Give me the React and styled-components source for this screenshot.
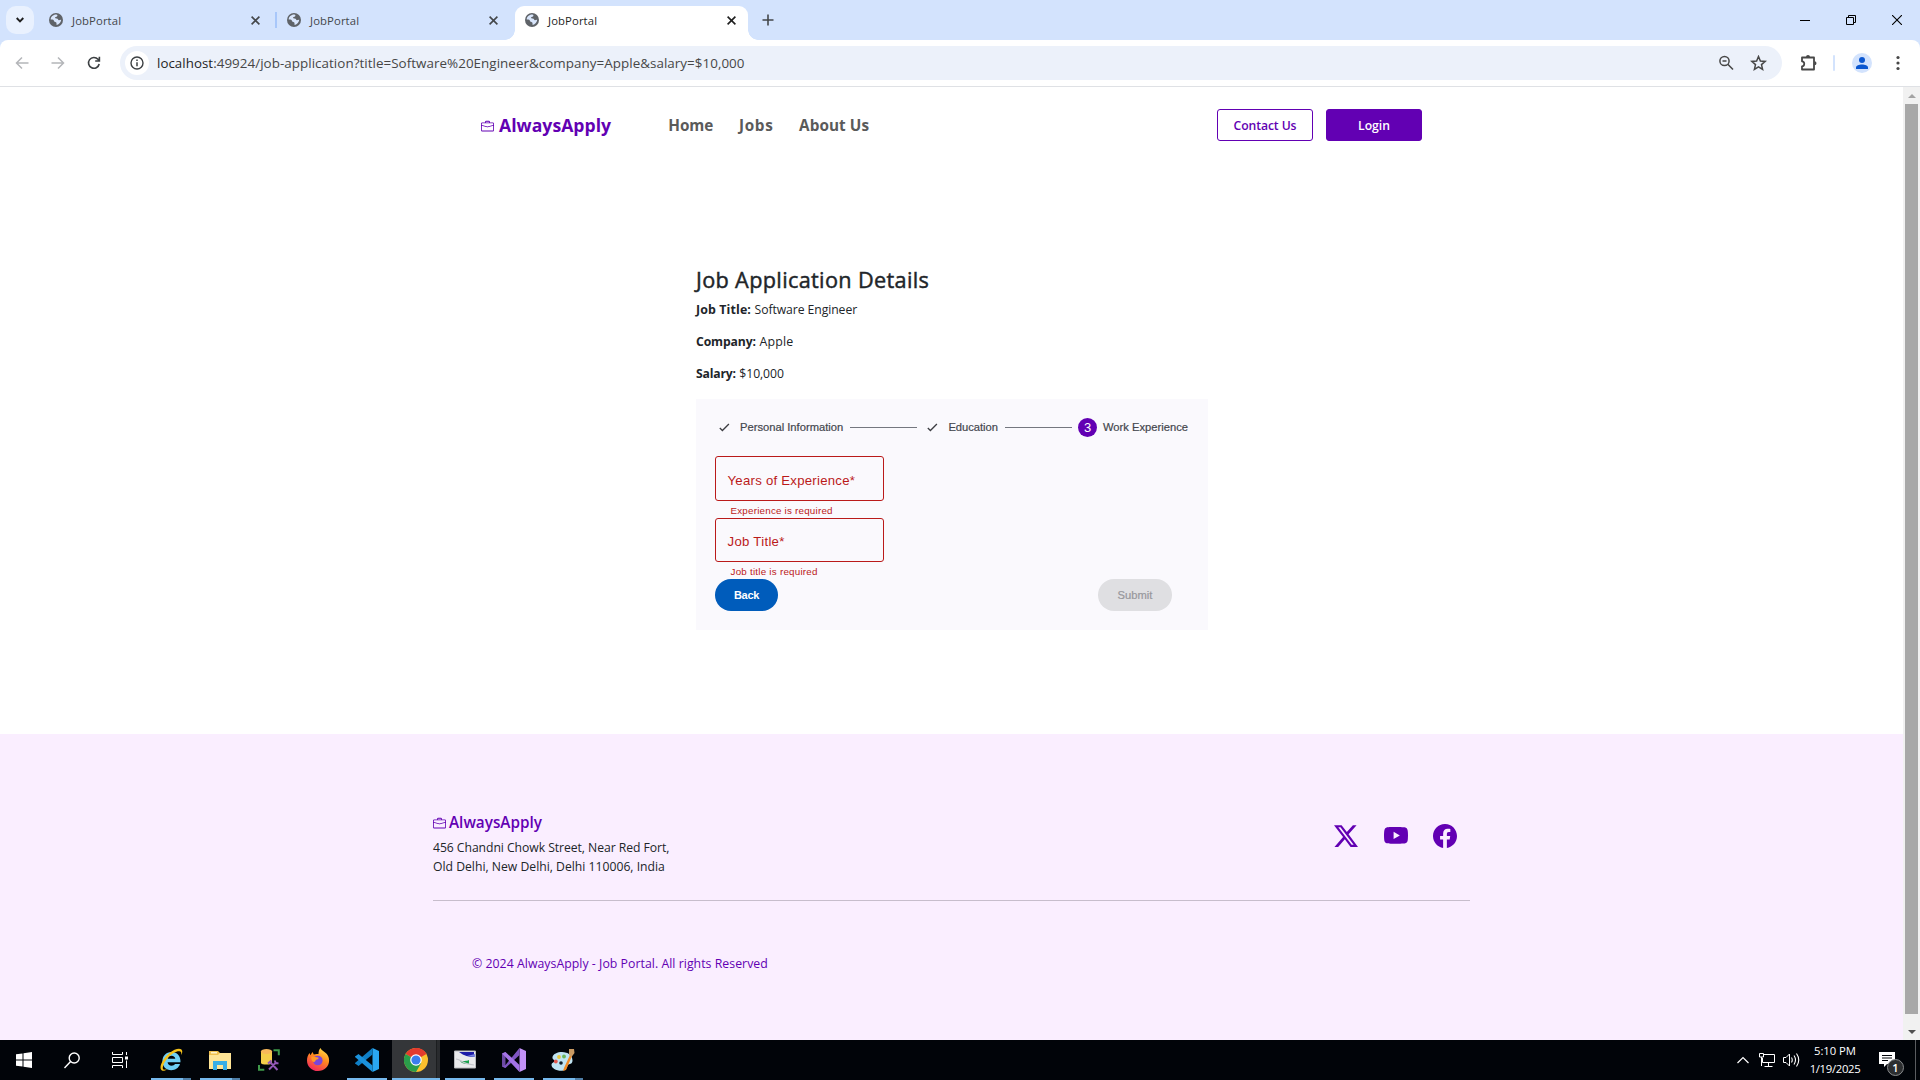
import React from "react";
import styled, { createGlobalStyle, css } from "styled-components";
import { BsTwitterX, BsYoutube, BsFacebook, BsBriefcase } from "react-icons/bs";

const ui = '"Open Sans", "Noto Sans", sans-serif';
const arial = '"Liberation Sans", Arial, sans-serif';
const purple = "#6200b3";

const Global = createGlobalStyle`
  * { box-sizing: border-box; }
  html, body { margin: 0; padding: 0; background: #fff; }
  body { width: 1920px; height: 1080px; overflow: hidden; font-family: ${ui}; }
  svg { display: block; flex: none; }
`;

const Txt = styled.span`
  display: block;
  flex: none;
  white-space: pre;
  font-family: ${(p) => (p.$arial ? arial : ui)};
  font-size: ${(p) => p.$s || 12.2}px;
  font-weight: ${(p) => p.$b || 400};
  letter-spacing: ${(p) => p.$ls || 0}px;
  line-height: ${(p) => p.$lh || 19}px;
  color: ${(p) => p.$c || "#212529"};
  -webkit-text-stroke: ${(p) => p.$stroke || 0}px currentColor;
`;

const Screen = styled.div`
  width: 1920px;
  height: 1080px;
  display: flex;
  flex-direction: column;
  background: #fff;
`;

/* ---------- browser ---------- */
const TabStrip = styled.div`
  height: 40px;
  display: flex;
  background: #d3e3fd;
  padding: 6px 0 0 6px;
`;
const TabSearch = styled.div`
  width: 28px;
  height: 28px;
  border-radius: 10px;
  background: #e9f1fe;
  display: grid;
  place-items: center;
  margin-right: 5px;
`;
const Tab = styled.div`
  position: relative;
  width: ${(p) => (p.$active ? 233 : 238)}px;
  height: 34px;
  padding: 0 0 6px 10px;
  display: flex;
  align-items: center;
  ${(p) =>
    p.$active &&
    css`
      background: #fff;
      border-radius: 9px 9px 0 0;
      &::before,
      &::after {
        content: "";
        position: absolute;
        bottom: 0;
        width: 10px;
        height: 10px;
      }
      &::before {
        left: -10px;
        background: radial-gradient(circle at 0 0, transparent 9.5px, #fff 10px);
      }
      &::after {
        right: -10px;
        background: radial-gradient(circle at 100% 0, transparent 9.5px, #fff 10px);
      }
    `}
`;
const TabTitle = styled.div`
  margin-left: 9px;
  width: 179px;
`;
const TabDivider = styled.i`
  width: 2px;
  height: 16px;
  margin-left: 15px;
  background: #a8c7fa;
`;
const NewTab = styled.div`
  margin: 8px 0 0 14px;
`;
const WindowButtons = styled.div`
  margin-left: auto;
  display: flex;
  gap: 36px;
  padding: 9px 18px 0 0;
`;
const ToolbarBack = styled.div`
  background: #d3e3fd;
`;
const Toolbar = styled.div`
  height: 47px;
  background: #fff;
  border-bottom: 1px solid #dfe1e5;
  border-radius: 8px 8px 0 0;
  display: flex;
  align-items: center;
  padding-left: 14px;
`;
const NavIcons = styled.div`
  display: flex;
  gap: 20px;
  width: 106px;
`;
const Omnibox = styled.div`
  width: 1662px;
  height: 34px;
  border-radius: 17px;
  background: #ecf1fa;
  display: flex;
  align-items: center;
  padding: 0 15px 0 5px;
`;
const SiteInfo = styled.div`
  width: 24px;
  height: 24px;
  border-radius: 50%;
  background: #fff;
  display: grid;
  place-items: center;
  margin-right: 8px;
`;
const OmniRight = styled.div`
  margin-left: auto;
  display: flex;
  gap: 16px;
`;
const ToolRight = styled.div`
  display: flex;
  align-items: center;
  margin-left: 17px;
`;
const ToolSep = styled.i`
  width: 2px;
  height: 16px;
  border-radius: 1px;
  background: #d3e3fd;
  margin: 0 17px 0 16px;
`;
const Avatar = styled.div`
  width: 20px;
  height: 20px;
  border-radius: 50%;
  background: #d3e3fd;
  display: grid;
  place-items: center;
  margin-right: 24px;
`;

/* ---------- page ---------- */
const Viewport = styled.div`
  height: 953px;
  display: flex;
`;
const Page = styled.div`
  width: 1903px;
  height: 953px;
  display: flex;
  flex-direction: column;
`;
const Header = styled.header`
  height: 76px;
  padding: 0 481px;
  display: flex;
  align-items: center;
`;
const Brand = styled.div`
  display: flex;
  align-items: center;
  gap: ${(p) => p.$gap}px;
  padding-top: ${(p) => p.$top || 0}px;
  color: ${purple};
`;
const BrandName = styled.div`
  padding-bottom: ${(p) => p.$lift || 0}px;
`;
const Menu = styled.nav`
  display: flex;
  gap: 25.5px;
  margin-left: 57px;
`;
const HeaderActions = styled.div`
  display: flex;
  gap: 13px;
  margin-left: auto;
`;
const ActionButton = styled.div`
  width: 96px;
  height: 32px;
  border-radius: 3px;
  border: 1px solid ${purple};
  background: ${(p) => (p.$filled ? purple : "#fff")};
  display: flex;
  align-items: center;
  justify-content: center;
`;
const Main = styled.main`
  width: 1208px;
  height: 571px;
  padding: 103px 0 0 696px;
`;
const Heading = styled.div`
  margin-bottom: 6px;
`;
const Detail = styled.div`
  display: flex;
  gap: 3.5px;
  height: 32px;
`;
const Panel = styled.section`
  width: 512px;
  height: 231px;
  margin-top: 3px;
  background: #faf9fd;
  padding: 19px;
`;
const Stepper = styled.div`
  display: flex;
  align-items: center;
  height: 19px;
  padding-right: 1px;
  margin-bottom: 19px;
`;
const StepIcon = styled.div`
  width: 19px;
  height: 19px;
  border-radius: 50%;
  background: ${(p) => (p.$on ? purple : "transparent")};
  display: grid;
  place-items: center;
  margin-right: 6px;
`;
const StepLine = styled.i`
  flex: 1;
  height: 1px;
  background: #74777f;
  margin: 0 6px 0 7px;
`;
const Field = styled.div`
  width: 169px;
  height: ${(p) => p.$h}px;
  border: 1px solid #ba1a1a;
  border-radius: 3px;
  display: flex;
  align-items: center;
  padding: 3px 0 0 11.5px;
`;
const FieldError = styled.div`
  height: 17px;
  padding: 2px 0 0 15.5px;
`;
const FormActions = styled.div`
  display: flex;
  justify-content: space-between;
  padding-right: 17px;
`;
const Pill = styled.div`
  width: ${(p) => p.$w}px;
  height: 32px;
  border-radius: 16px;
  background: ${(p) => p.$bg};
  display: flex;
  align-items: center;
  justify-content: center;
`;
const Footer = styled.footer`
  height: 306px;
  background: #faeeff;
  padding: 77px 433px 0;
`;
const FooterTop = styled.div`
  display: flex;
  justify-content: space-between;
  height: 90px;
  border-bottom: 1px solid #c7bdcc;
`;
const Address = styled.div`
  margin-top: 3px;
`;
const Social = styled.div`
  display: flex;
  gap: 25.5px;
  padding: 13px 13px 0 0;
  color: ${purple};
`;
const Copyright = styled.div`
  padding: 53px 0 0 39px;
`;
const ScrollBar = styled.div`
  width: 17px;
  height: 953px;
  background: #f1f1f1;
  display: flex;
  flex-direction: column;
  align-items: center;
  justify-content: space-between;
`;
const ScrollArrow = styled.div`
  height: 17px;
  display: grid;
  place-items: center;
`;
const ScrollThumb = styled.div`
  width: 13px;
  height: 910px;
  margin-bottom: 9px;
  background: #a8a8a8;
`;

/* ---------- taskbar ---------- */
const Taskbar = styled.div`
  height: 40px;
  background: #010409;
  display: flex;
`;
const SystemButtons = styled.div`
  display: flex;
  width: 147px;
`;
const SysButton = styled.div`
  width: 48px;
  height: 40px;
  display: grid;
  place-items: center;
`;
const AppButton = styled.div`
  width: ${(p) => (p.$active ? 48 : 49)}px;
  height: 40px;
  margin-right: ${(p) => (p.$active ? 1 : 0)}px;
  padding: 8px ${(p) => (p.$active ? "0 0 0" : "5px 0 4px")};
  display: flex;
  flex-direction: column;
  align-items: center;
  justify-content: space-between;
  background: ${(p) => (p.$active ? "linear-gradient(90deg, #343639 44px, #1c1e20 44px, #1c1e20 45px, #292b2e 45px)" : "transparent")};
`;
const Running = styled.i`
  width: ${(p) => (p.$full ? 48 : 40)}px;
  height: 2px;
  background: ${(p) => (p.$split ? "linear-gradient(90deg, #76b9ed 32px, #4f7fa8 32px)" : "#76b9ed")};
  visibility: ${(p) => (p.$off ? "hidden" : "visible")};
`;
const Tray = styled.div`
  margin-left: auto;
  display: flex;
  align-items: center;
  height: 40px;
`;
const Clock = styled.div`
  display: flex;
  flex-direction: column;
  align-items: center;
  width: 52px;
  margin: 0 18px 0 9px;
`;
const Notice = styled.div`
  position: relative;
  width: 36px;
  height: 40px;
  padding-top: 12px;
`;
const Badge = styled.div`
  position: absolute;
  left: 8px;
  top: 19px;
  width: 17px;
  height: 17px;
  border-radius: 50%;
  border: 1px solid #8a8c8e;
  background: #2c2e30;
  display: grid;
  place-items: center;
`;
const DesktopEdge = styled.i`
  width: 1px;
  height: 40px;
  background: #5a5c60;
  margin-right: 4px;
`;

const Globe = () => (
  <svg width="14" height="14" viewBox="0 0 14 14">
    <circle cx="7" cy="7" r="7" fill="#5f6368" />
    <path d="M7.2 1.6C8.6 2 8.8 2.600 8 3.400c-.8.6-1.800.2-2 1.200-.1.9.9 1 1.800 1 1.400 0 1 1.400 2 1.600 1 .1 1.400-.6 2.400-.4-.2 2.600-2 4.600-4.400 5.200-.8-.8.2-1.600-.6-2.400C6.400 8.800 4.800 9 4.800 7.600 4.600 6.400 2.800 6.400 1.700 6.600 1.700 4 4 1.600 7.200 1.600Z" fill="#d9e6fc" />
  </svg>
);
const Cross = ({ s = 8, c = "#44474a", w = 1.6 }) => (
  <svg width={s} height={s} viewBox={`0 0 ${s} ${s}`}>
    <path d={`M.6 .6L${s - 0.6} ${s - 0.6}M${s - 0.6} .6L.6 ${s - 0.6}`} stroke={c} strokeWidth={w} fill="none" />
  </svg>
);
const Check = () => (
  <svg width="11" height="9" viewBox="0 0 11 9">
    <path d="M.8 5L3.400 7.500L9.900 1" fill="none" stroke="#3c3d42" strokeWidth="1.300" />
  </svg>
);

const IE = () => (
  <svg width="24" height="24" viewBox="0 0 24 24">
    <path d="M21.500 14.200H8.600c.2 2.200 1.800 3.500 4 3.500 1.600 0 2.700-.6 3.400-1.700h5c-1.300 3.900-4.500 6.200-8.700 6.200-5.400 0-8.900-3.700-8.900-8.900C3.400 8 7 4 12.400 4c5.800 0 9.300 4 9.100 10.200ZM8.700 10.800h7.600C16.100 9 14.700 7.700 12.600 7.700S9 8.900 8.700 10.800Z" fill="#6fd0f6" />
    <path d="M3 22.600C-.8 20.500 3.200 11 10.500 5 16 .5 22.500-.8 23.200 3c.2 1.200-.2 2.800-1 4.300.3-1.800.2-3.300-1-3.800-2.700-1-7.800 1.500-12 6C4.600 14.500 2.300 20.500 4.800 21.600c.9.4 2.200 0 3.600-.7-2 1.600-4 2.300-5.400 1.700Z" fill="#f5c21b" />
  </svg>
);
const Folder = () => (
  <svg width="24" height="24" viewBox="0 0 24 24">
    <path d="M1 3h9l2 2h11v16H1Z" fill="#f0c04e" />
    <path d="M1 7h9l2-2h11v16H1Z" fill="#ffe596" />
    <path d="M3 4h6v1.500H3Z" fill="#fff3c8" />
    <path d="M5 22v-9h14v9h-4v-5H9v5Z" fill="#38aee6" />
  </svg>
);
const DbTool = () => (
  <svg width="24" height="24" viewBox="0 0 24 24">
    <path d="M4 4v11c0 2 11 2 11 0V4Z" fill="#f4ce4a" />
    <ellipse cx="9.500" cy="3.500" rx="5.600" ry="2.400" fill="#f7b85a" />
    <path d="M16.500 2.200h5.300v5M2 17v4.800h5.300" fill="none" stroke="#3f9a4a" strokeWidth="2" />
    <path d="M12 21.500l7.500-7.500M12.500 13.500l8 8.500M11 15.500l3.500-3M18 12.500c0 2 1 3 3.500 2.800" fill="none" stroke="#9257b6" strokeWidth="2" />
  </svg>
);
const Firefox = () => (
  <svg width="24" height="24" viewBox="0 0 24 24">
    <defs>
      <linearGradient id="ff" x1="0.8" y1="0" x2="0.3" y2="1">
        <stop offset="0" stopColor="#ffe14a" />
        <stop offset=".45" stopColor="#ff8a1e" />
        <stop offset="1" stopColor="#f2265e" />
      </linearGradient>
    </defs>
    <path d="M14.500 0c.8 2.200 3 3.200 4.600 4.600 2.600 2 4 4.600 4 7.900C23.100 18.600 18.200 23 12 23S1 18.400 1 12.400c0-3 1-5.600 2.600-7.400l.8 2.200L6.500 4l1.300 2.600C10 5.500 11.500 6 12.500 6c0-2.500.6-4.700 2-6Z" fill="url(#ff)" />
    <circle cx="11.800" cy="12.500" r="4.800" fill="#7a45d8" />
    <path d="M5.500 8.500c3 .2 4.500 1 6.500 1 1.200.2.500 1.800-1.300 2-1.500.4-1 2.500-3.200 2.500-1.600-.5-2.700-3-2-5.500Z" fill="#ff9a26" />
  </svg>
);
const VSCode = () => (
  <svg width="24" height="24" viewBox="0 0 24 24">
    <path d="M17.500 0L24 3v18l-6.500 3Z" fill="#2aa7f2" />
    <path d="M17.500 0v6.500L3.500 18 0 15.600 0 15Z" fill="#0f7fc6" />
    <path d="M17.500 24v-6.500L3.500 6 0 8.400v.6Z" fill="#1b92dc" />
  </svg>
);
const Chrome = () => (
  <svg width="24" height="24" viewBox="0 0 24 24">
    <circle cx="12" cy="12" r="12" fill="#fbc02d" />
    <path d="M12 12L1.600 6A12 12 0 0 1 22.400 6Z" fill="#e33b2e" />
    <path d="M12 12V6h10.400A12 12 0 0 0 12 0Z" fill="#e33b2e" />
    <path d="M1.600 6A12 12 0 0 0 12 24L17.200 15 12 12Z" fill="#2a9d4a" />
    <circle cx="12" cy="12" r="5.800" fill="#fff" />
    <circle cx="12" cy="12" r="4.600" fill="#3b7ded" />
  </svg>
);
const Remote = () => (
  <svg width="24" height="24" viewBox="0 0 24 24">
    <path d="M1.500 3h21v17h-21Z" fill="#e9eaec" stroke="#b8babd" />
    <path d="M6 4h15v5c-5 0-10-1-15-5Z" fill="#1c1ca8" />
    <path d="M14 8l8-2v3Z" fill="#7a86dc" />
    <path d="M7 13.500c4-1 6 0 9-1.500v4c-3 0-6 0-9-2.500Z" fill="#18a34c" />
    <path d="M3 11c5 0 5 5 18 6" fill="none" stroke="#c2c5ca" strokeWidth="1.200" />
  </svg>
);
const VisualStudio = () => (
  <svg width="24" height="24" viewBox="0 0 24 24">
    <path d="M17.500 0L24 3v18l-6.500 3Z" fill="#c392f7" />
    <path d="M0 5.500L3.500 4v16L0 18.500Z" fill="#6d4aa4" />
    <path d="M17.500 0v7L3.500 20 0 18.500 3.500 17Z" fill="#7f55c2" />
    <path d="M17.500 24v-7L3.500 4 0 5.500 2.500 8Z" fill="#a474e6" />
  </svg>
);
const Paint = () => (
  <svg width="24" height="24" viewBox="0 0 24 24">
    <path d="M11 4c6 0 10.500 3.500 10.500 8.500 0 3-2 3.500-4 4-2 .6-.5 6-6.500 6.300C5 23 .5 20 .5 17c0-2.500 2.800-2.300 3-4C3.600 11.500 1 11.500 1.500 9 2 6 6.500 4 11 4Z" fill="#bfe3f2" />
    <circle cx="4.800" cy="13.500" r="1.900" fill="#e2574c" />
    <circle cx="8" cy="9" r="1.900" fill="#e9c83e" />
    <circle cx="13" cy="8.500" r="1.900" fill="#69b55a" />
    <circle cx="10" cy="15" r="1.800" fill="#10202c" />
    <path d="M19 7l2 1-6 14-3 1 1-3Z" fill="#f08a24" />
    <path d="M18 1l5 0 .5 4-3 4-2.500-2Z" fill="#c99a62" />
  </svg>
);

const apps = [
  { I: IE, split: true },
  { I: Folder, split: true },
  { I: DbTool, off: true },
  { I: Firefox, off: true },
  { I: VSCode },
  { I: Chrome, active: true },
  { I: Remote },
  { I: VisualStudio },
  { I: Paint, split: true },
];

const BrowserTab = ({ active, divider }) => (
  <Tab $active={active}>
    <Globe />
    <TabTitle>
      <Txt $s={11.3} $ls={0.11} $c={active ? "#1f1f1f" : "#44474a"}>JobPortal</Txt>
    </TabTitle>
    <Cross s={9} c={active ? "#1f1f1f" : "#44474a"} />
    {divider && <TabDivider />}
  </Tab>
);

export default function App() {
  return (
    <Screen>
      <Global />
      <TabStrip>
        <TabSearch>
          <svg width="8" height="6" viewBox="0 0 8 6"><path d="M.7 1L4 4.300 7.300 1" fill="none" stroke="#1f1f1f" strokeWidth="1.900" /></svg>
        </TabSearch>
        <BrowserTab divider />
        <BrowserTab />
        <BrowserTab active />
        <NewTab>
          <svg width="12" height="12" viewBox="0 0 12 12"><path d="M6 .5v11M.5 6h11" stroke="#44474a" strokeWidth="1.600" /></svg>
        </NewTab>
        <WindowButtons>
          <svg width="10" height="10" viewBox="0 0 10 10"><path d="M0 5.500h10" stroke="#000" /></svg>
          <svg width="10" height="10" viewBox="0 0 10 10"><path d="M.5 2.500h7v7h-7ZM2.500 2.500v-2h7v7h-2" fill="none" stroke="#000" /></svg>
          <svg width="10" height="10" viewBox="0 0 10 10"><path d="M0 0l10 10M10 0L0 10" stroke="#000" strokeWidth="1.100" /></svg>
        </WindowButtons>
      </TabStrip>
      <ToolbarBack>
        <Toolbar>
          <NavIcons>
            <svg width="16" height="16" viewBox="0 0 16 16"><path d="M14.500 8H2.500M8 2.500L2.500 8 8 13.500" fill="none" stroke="#b4b6b9" strokeWidth="1.500" /></svg>
            <svg width="16" height="16" viewBox="0 0 16 16"><path d="M1.500 8h12M8 2.500L13.500 8 8 13.500" fill="none" stroke="#b4b6b9" strokeWidth="1.500" /></svg>
            <svg width="16" height="16" viewBox="0 0 16 16"><path d="M13.200 9A5.400 5.400 0 1 1 12 4.300L13.200 5.600M13.400 1.800V6H9.200" fill="none" stroke="#3c4043" strokeWidth="1.600" /></svg>
          </NavIcons>
          <Omnibox>
            <SiteInfo>
              <svg width="14" height="14" viewBox="0 0 14 14"><circle cx="7" cy="7" r="6" fill="none" stroke="#3c4043" strokeWidth="1.400" /><path d="M7 6.300v4M7 3.500v1.500" stroke="#3c4043" strokeWidth="1.500" /></svg>
            </SiteInfo>
            <Txt $s={13.3} $ls={0.05} $c="#1f1f1f">localhost</Txt>
            <Txt $s={13.4} $ls={0.045} $c="#474747">:49924/job-application?title=Software%20Engineer&company=Apple&salary=$10,000</Txt>
            <OmniRight>
              <svg width="16" height="16" viewBox="0 0 16 16"><circle cx="6.500" cy="6" r="4.600" fill="none" stroke="#474747" strokeWidth="1.500" /><path d="M4.500 6h4M9.800 9.300L15 14.500" stroke="#474747" strokeWidth="1.600" /></svg>
              <svg width="17" height="16" viewBox="0 0 17 16"><path d="M8.500 1.500L10.400 6l4.800.4-3.700 3.200 1.100 4.800-4.100-2.500-4.100 2.500 1.100-4.800L1.800 6.400 6.600 6Z" fill="none" stroke="#474747" strokeWidth="1.500" /></svg>
            </OmniRight>
          </Omnibox>
          <ToolRight>
            <svg width="18" height="18" viewBox="0 0 18 18"><path d="M3 3.500h12v12H3v-3.200c3 0 3-5 0-5Z" fill="none" stroke="#474747" strokeWidth="1.800" strokeLinejoin="round" /><path d="M7 3a2 2 0 0 1 4 0ZM15.500 7.300a2 2 0 0 1 0 4Z" fill="#474747" /></svg>
            <ToolSep />
            <Avatar>
              <svg width="12" height="12" viewBox="0 0 12 12"><circle cx="6" cy="3" r="3" fill="#0b57d0" /><path d="M0 12V10.500C0 6.500 12 6.500 12 10.500V12Z" fill="#0b57d0" /></svg>
            </Avatar>
            <svg width="4" height="16" viewBox="0 0 4 16"><circle cx="2" cy="2.500" r="1.600" fill="#474747" /><circle cx="2" cy="8" r="1.600" fill="#474747" /><circle cx="2" cy="13.500" r="1.600" fill="#474747" /></svg>
          </ToolRight>
        </Toolbar>
      </ToolbarBack>

      <Viewport>
        <Page>
          <Header>
            <Brand $gap={5} $top={2}>
              <BsBriefcase size={13} />
              <BrandName $lift={2}><Txt $s={17.6} $ls={0.04} $b={700} $c={purple} $lh={24}>AlwaysApply</Txt></BrandName>
            </Brand>
            <Menu>
              <Txt $s={15.3} $b={700} $c="#5a5a5a">Home</Txt>
              <Txt $s={15.3} $ls={0.7} $b={700} $c="#5a5a5a">Jobs</Txt>
              <Txt $s={15.3} $ls={0.07} $b={700} $c="#5a5a5a">About Us</Txt>
            </Menu>
            <HeaderActions>
              <ActionButton><Txt $ls={-0.09} $b={600} $c={purple}>Contact Us</Txt></ActionButton>
              <ActionButton $filled><Txt $b={600} $c="#fff">Login</Txt></ActionButton>
            </HeaderActions>
          </Header>
          <Main>
            <Heading><Txt $s={21.7} $ls={0.33} $stroke={0.45} $lh={28}>Job Application Details</Txt></Heading>
            <Detail><Txt $s={12.4} $ls={0.12} $b={700}>Job Title:</Txt><Txt $ls={-0.07}>Software Engineer</Txt></Detail>
            <Detail><Txt $ls={-0.11} $b={700}>Company:</Txt><Txt $s={12.4} $ls={0.18}>Apple</Txt></Detail>
            <Detail><Txt $ls={-0.18} $b={700}>Salary:</Txt><Txt $ls={-0.07}>$10,000</Txt></Detail>
            <Panel>
              <Stepper>
                <StepIcon><Check /></StepIcon>
                <Txt $arial $s={11.2} $stroke={0.2} $c="#44474e">Personal Information</Txt>
                <StepLine />
                <StepIcon><Check /></StepIcon>
                <Txt $arial $s={11.2} $ls={-0.03} $stroke={0.2} $c="#44474e">Education</Txt>
                <StepLine />
                <StepIcon $on><Txt $arial $s={13} $lh={17} $c="#fff">3</Txt></StepIcon>
                <Txt $arial $s={11.2} $stroke={0.2} $c="#44474e">Work Experience</Txt>
              </Stepper>
              <Field $h={45}><Txt $arial $s={13.2} $ls={0.25} $c="#ba1a1a">Years of Experience*</Txt></Field>
              <FieldError><Txt $arial $s={9.8} $ls={0.215} $lh={15} $c="#ba1a1a">Experience is required</Txt></FieldError>
              <Field $h={44}><Txt $arial $s={13.2} $ls={0.29} $c="#ba1a1a">Job Title*</Txt></Field>
              <FieldError><Txt $arial $s={9.8} $ls={0.238} $lh={15} $c="#ba1a1a">Job title is required</Txt></FieldError>
              <FormActions>
                <Pill $w={63} $bg="#005cbb"><Txt $arial $s={11} $ls={-0.3} $b={700} $c="#fff">Back</Txt></Pill>
                <Pill $w={74} $bg="#dfdfe2"><Txt $arial $s={11.2} $ls={0.03} $stroke={0.2} $c="#97979c">Submit</Txt></Pill>
              </FormActions>
            </Panel>
          </Main>
          <Footer>
            <FooterTop>
              <div>
                <Brand $gap={3} $top={1}>
                  <BsBriefcase size={13} />
                  <BrandName $lift={2}><Txt $s={15.3} $b={600} $c={purple} $lh={21}>AlwaysApply</Txt></BrandName>
                </Brand>
                <Address>
                  <Txt $ls={-0.055}>456 Chandni Chowk Street, Near Red Fort,</Txt>
                  <Txt>Old Delhi, New Delhi, Delhi 110006, India</Txt>
                </Address>
              </div>
              <Social><BsTwitterX size={24} /><BsYoutube size={24} /><BsFacebook size={24} /></Social>
            </FooterTop>
            <Copyright><Txt $s={12.3} $ls={0.03} $c={purple}>© 2024 AlwaysApply - Job Portal. All rights Reserved</Txt></Copyright>
          </Footer>
        </Page>
        <ScrollBar>
          <ScrollArrow><svg width="8" height="4" viewBox="0 0 8 4"><path d="M0 4L4 0l4 4Z" fill="#a3a3a3" /></svg></ScrollArrow>
          <ScrollThumb />
          <ScrollArrow><svg width="8" height="4" viewBox="0 0 8 4"><path d="M0 0l4 4 4-4Z" fill="#505050" /></svg></ScrollArrow>
        </ScrollBar>
      </Viewport>

      <Taskbar>
        <SystemButtons>
          <SysButton><svg width="16" height="16" viewBox="0 0 16 16"><path d="M0 2.300L6.500 1.400V7.500H0ZM7.500 1.200L16 0V7.500H7.500ZM0 8.500H6.500v6.100L0 13.700ZM7.500 8.500H16V16L7.500 14.800Z" fill="#fff" /></svg></SysButton>
          <SysButton><svg width="16" height="17" viewBox="0 0 16 17"><circle cx="10.200" cy="6" r="5" fill="none" stroke="#fff" strokeWidth="1.400" /><path d="M6.600 9.600L.5 16" stroke="#fff" strokeWidth="1.400" /></svg></SysButton>
          <SysButton><svg width="16" height="16" viewBox="0 0 16 16"><path d="M.5 0v2.500h10V0M.5 5.500h10v5H.5ZM.5 16v-2.500h10V16M14.500 0v3M14.500 8.500V16" fill="none" stroke="#fff" /><path d="M13 4.500h3v3h-3Z" fill="#fff" /></svg></SysButton>
        </SystemButtons>
        {apps.map(({ I, ...a }, i) => (
          <AppButton key={i} $active={a.active}><I /><Running $split={a.split} $off={a.off} $full={a.active} /></AppButton>
        ))}
        <Tray>
          <svg width="12" height="8" viewBox="0 0 12 8"><path d="M.5 7L6 1.500 11.500 7" fill="none" stroke="#fff" strokeWidth="1.200" /></svg>
          <svg width="34" height="16" viewBox="-10 0 34 16"><path d="M5 2.500h10.500v8H3.500V6M9.500 10.500v4M5.500 14.500h8M.5 1.500h4v3.500h-4ZM2.500 5v9" fill="none" stroke="#fff" /></svg>
          <svg width="17" height="16" viewBox="0 0 17 16"><path d="M.5 5.500h2.500L6.500 2v12L3 10.500H.5Z" fill="none" stroke="#fff" /><path d="M8.500 5.500q1.500 2.500 0 5M11 3.500q3 4.500 0 9M13.500 1.500q4.500 6.500 0 13" fill="none" stroke="#fff" strokeWidth="1.100" /></svg>
          <Clock>
            <Txt $s={11.3} $ls={-0.04} $lh={18} $c="#fff">5:10 PM</Txt>
            <Txt $s={11.3} $ls={-0.31} $lh={18} $c="#fff">1/19/2025</Txt>
          </Clock>
          <Notice>
            <svg width="16" height="16" viewBox="0 0 16 16"><path d="M0 0h16v12H8l-3 3v-3H0Z" fill="#fff" /><path d="M3 3.500h10M3 6h10M3 8.500h6" stroke="#010409" /></svg>
            <Badge><Txt $s={11} $lh={15} $b={600} $c="#fff">1</Txt></Badge>
          </Notice>
          <DesktopEdge />
        </Tray>
      </Taskbar>
    </Screen>
  );
}
